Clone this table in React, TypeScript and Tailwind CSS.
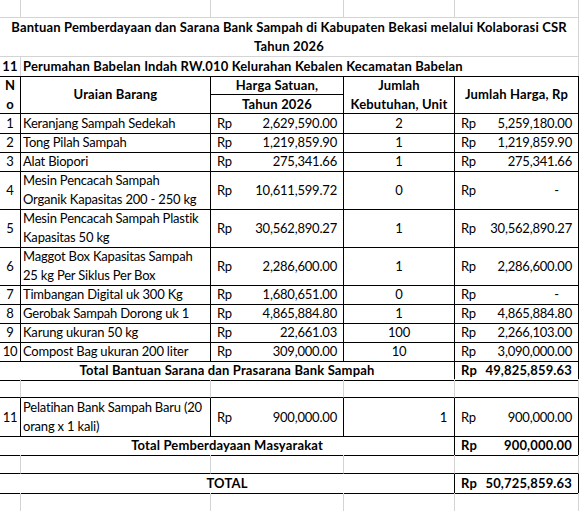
const cols = 'grid grid-cols-[21px_190px_133px_111px_124px_3px]'

type Item = { no: string; name: string[]; harga: string; qty: string; total: string }

const items: Item[] = [
  { no: '1', name: ['Keranjang Sampah Sedekah'], harga: '2,629,590.00', qty: '2', total: '5,259,180.00' },
  { no: '2', name: ['Tong Pilah Sampah'], harga: '1,219,859.90', qty: '1', total: '1,219,859.90' },
  { no: '3', name: ['Alat Biopori'], harga: '275,341.66', qty: '1', total: '275,341.66' },
  { no: '4', name: ['Mesin Pencacah Sampah', 'Organik Kapasitas 200 - 250 kg'], harga: '10,611,599.72', qty: '0', total: '-' },
  { no: '5', name: ['Mesin Pencacah Sampah Plastik', 'Kapasitas 50 kg'], harga: '30,562,890.27', qty: '1', total: '30,562,890.27' },
  { no: '6', name: ['Maggot Box Kapasitas Sampah', '25 kg Per Siklus Per Box'], harga: '2,286,600.00', qty: '1', total: '2,286,600.00' },
  { no: '7', name: ['Timbangan Digital uk 300 Kg'], harga: '1,680,651.00', qty: '0', total: '-' },
  { no: '8', name: ['Gerobak Sampah Dorong uk 1'], harga: '4,865,884.80', qty: '1', total: '4,865,884.80' },
  { no: '9', name: ['Karung ukuran 50 kg'], harga: '22,661.03', qty: '100', total: '2,266,103.00' },
  { no: '10', name: ['Compost Bag ukuran 200 liter'], harga: '309,000.00', qty: '10', total: '3,090,000.00' },
]

// Excel style gridline row (empty cells, grey lines)
function BlankRow({ h, bottom }: { h: string; bottom: string }) {
  return (
    <div className={`${cols} ${h}`}>
      <div className={`border-r border-r-[#d4d4d4] border-b ${bottom}`} />
      <div className={`border-r border-r-[#d4d4d4] border-b ${bottom}`} />
      <div className={`border-r border-r-[#d4d4d4] border-b ${bottom}`} />
      <div className={`border-r border-r-[#d4d4d4] border-b ${bottom}`} />
      <div className={`border-r border-r-[#d4d4d4] border-b ${bottom}`} />
      <div />
    </div>
  )
}

function Money({ value, bold }: { value: string; bold?: boolean }) {
  return (
    <div className={`flex items-center justify-between pl-[6px] ${value === '-' ? 'pr-[19px]' : 'pr-[6px]'} ${bold ? 'font-bold tracking-[0.15px]' : ''}`}>
      <span>Rp</span>
      <span>{value}</span>
    </div>
  )
}

function TotalRow({ label, value, h }: { label: string; value: string; h: string }) {
  return (
    <div className={`${cols} ${h} font-bold tracking-[0.15px]`}>
      <div className="col-span-4 flex items-center justify-center border-r border-b border-black">{label}</div>
      <div className="grid border-r border-b border-black">
        <Money value={value} bold />
      </div>
      <div />
    </div>
  )
}

export default function App() {
  return (
    <div className="h-[511px] w-[582px] overflow-hidden bg-white font-['Lato',sans-serif] text-[13px] leading-[19px] tracking-[-0.2px] text-black">
      <BlankRow h="h-[18px]" bottom="border-b-[#d4d4d4]" />

      {/* Title */}
      <div className={`${cols} h-[39px]`}>
        <div className="col-span-5 flex items-center justify-center whitespace-nowrap border-r border-b border-[#d4d4d4] text-center font-bold tracking-[0.15px]">
          Bantuan Pemberdayaan dan Sarana Bank Sampah di Kabupaten Bekasi melalui Kolaborasi CSR
          <br />
          Tahun 2026
        </div>
        <div />
      </div>

      {/* Location row */}
      <div className={`${cols} h-[19px] font-bold tracking-[0.15px]`}>
        <div className="flex items-center justify-center border-r border-r-[#d4d4d4] border-b border-b-black">11</div>
        <div className="col-span-4 flex items-center whitespace-nowrap border-r border-r-[#d4d4d4] border-b border-b-black pl-[2px]">
          Perumahan Babelan Indah RW.010 Kelurahan Kebalen Kecamatan Babelan
        </div>
        <div />
      </div>

      {/* Header */}
      <div className={`${cols} grid-rows-[19px_19px] font-bold tracking-[0.15px]`}>
        <div className="row-span-2 flex flex-col items-center justify-center border-r border-b border-black">
          <span>N</span>
          <span>o</span>
        </div>
        <div className="row-span-2 flex items-center justify-center border-r border-b border-black">Uraian Barang</div>
        <div className="flex items-center justify-center border-r border-b border-black">Harga Satuan,</div>
        <div className="row-span-2 flex items-center justify-center border-r border-b border-black text-center">
          Jumlah
          <br />
          Kebutuhan, Unit
        </div>
        <div className="row-span-2 flex items-center justify-center border-r border-b border-black">Jumlah Harga, Rp</div>
        <div className="row-span-2" />
        <div className="col-start-3 flex items-center justify-center border-r border-b border-black">Tahun 2026</div>
      </div>

      {/* Items */}
      {items.map(it => (
        <div key={it.no} className={`${cols} ${it.name.length > 1 ? 'h-[38px]' : 'h-[19px]'}`}>
          <div className="flex items-center justify-center border-r border-b border-black">{it.no}</div>
          <div className="flex flex-col justify-center whitespace-nowrap border-r border-b border-black pl-[2px]">
            {it.name.map(n => (
              <span key={n}>{n}</span>
            ))}
          </div>
          <div className="grid border-r border-b border-black">
            <Money value={it.harga} />
          </div>
          <div className="flex items-center justify-center border-r border-b border-black">{it.qty}</div>
          <div className="grid border-r border-b border-black">
            <Money value={it.total} />
          </div>
          <div />
        </div>
      ))}

      <TotalRow label="Total Bantuan Sarana dan Prasarana Bank Sampah" value="49,825,859.63" h="h-[18px]" />
      <BlankRow h="h-[19px]" bottom="border-b-black" />

      {/* Pemberdayaan */}
      <div className={`${cols} h-[38px]`}>
        <div className="flex items-center justify-center border-r border-b border-black">11</div>
        <div className="flex flex-col justify-center whitespace-nowrap border-r border-b border-black pl-[2px]">
          <span>Pelatihan Bank Sampah Baru (20</span>
          <span>orang x 1 kali)</span>
        </div>
        <div className="grid border-r border-b border-black">
          <Money value="900,000.00" />
        </div>
        <div className="flex items-center justify-end border-r border-b border-black pr-[7px]">1</div>
        <div className="grid border-r border-b border-black">
          <Money value="900,000.00" />
        </div>
        <div />
      </div>

      <TotalRow label="Total Pemberdayaan Masyarakat" value="900,000.00" h="h-[19px]" />
      <BlankRow h="h-[19px]" bottom="border-b-black" />
      <TotalRow label="TOTAL" value="50,725,859.63" h="h-[19px]" />
      <BlankRow h="h-[19px]" bottom="border-b-[#d4d4d4]" />
    </div>
  )
}
